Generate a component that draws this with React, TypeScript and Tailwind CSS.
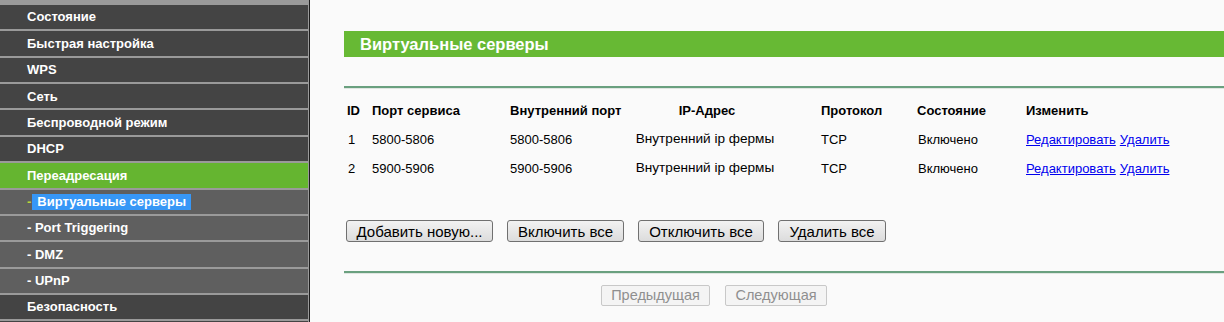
import React from "react";

type MenuItem = {
  label: string;
  kind: "top" | "sub" | "active" | "selected";
};

const menu: MenuItem[] = [
  { label: "Состояние", kind: "top" },
  { label: "Быстрая настройка", kind: "top" },
  { label: "WPS", kind: "top" },
  { label: "Сеть", kind: "top" },
  { label: "Беспроводной режим", kind: "top" },
  { label: "DHCP", kind: "top" },
  { label: "Переадресация", kind: "active" },
  { label: "Виртуальные серверы", kind: "selected" },
  { label: "Port Triggering", kind: "sub" },
  { label: "DMZ", kind: "sub" },
  { label: "UPnP", kind: "sub" },
  { label: "Безопасность", kind: "top" },
];

type Row = {
  id: number;
  servicePort: string;
  innerPort: string;
  ip: string;
  protocol: string;
  status: string;
};

const rows: Row[] = [
  {
    id: 1,
    servicePort: "5800-5806",
    innerPort: "5800-5806",
    ip: "Внутренний ip фермы",
    protocol: "TCP",
    status: "Включено",
  },
  {
    id: 2,
    servicePort: "5900-5906",
    innerPort: "5900-5906",
    ip: "Внутренний ip фермы",
    protocol: "TCP",
    status: "Включено",
  },
];

function Sidebar() {
  return (
    <div className="flex shrink-0">
      <div className="flex w-[309px] flex-col gap-[2px] bg-[#9a9a9a] pt-[5px] pr-px">
        {menu.map((item) => {
          const bg =
            item.kind === "active"
              ? "bg-[#65b530]"
              : item.kind === "top"
                ? "bg-[#444444]"
                : "bg-[#5f5f5f]";
          return (
            <div
              key={item.label}
              className={`flex h-[24.36px] shrink-0 items-center pl-[27px] text-[13px] font-bold text-white ${bg}`}
            >
              {item.kind === "selected" ? (
                <>
                  <span className="text-[#b9d53a]">-</span>
                  <span className="ml-px bg-[#3797f6] px-[5px] leading-[16px]">
                    Виртуальные серверы
                  </span>
                </>
              ) : item.kind === "sub" ? (
                <span>- {item.label}</span>
              ) : (
                <span>{item.label}</span>
              )}
            </div>
          );
        })}
        <div className="h-[40px] shrink-0 bg-[#444444]" />
      </div>
      <div className="w-px bg-[#1e1e1e]" />
    </div>
  );
}

function Button({ label, w }: { label: string; w: string }) {
  return (
    <button
      type="button"
      className={`h-[22px] ${w} rounded-[3px] border border-[#707070] bg-gradient-to-b from-[#f2f2f2] to-[#dcdcdc] text-[15px] leading-none text-black`}
    >
      {label}
    </button>
  );
}

function PagerButton({ label, w }: { label: string; w: string }) {
  return (
    <button
      type="button"
      disabled
      className={`h-[21px] ${w} rounded-[2px] border border-[#c8c8c8] bg-[#f4f4f4] text-[14.5px] leading-none text-[#8f8f8f]`}
    >
      {label}
    </button>
  );
}

export default function App() {
  return (
    <div
      className="flex h-[322px] w-[1224px] overflow-hidden bg-[#fafafa]"
      style={{ fontFamily: '"Liberation Sans", Arial, sans-serif' }}
    >
      <Sidebar />

      <div className="flex flex-1 flex-col pt-[31px] pl-[34px]">
        <div className="flex h-[26px] items-center bg-[#67b934] pl-[16px] text-[16.5px] font-bold text-white">
          Виртуальные серверы
        </div>

        <div className="mt-[29px] h-[2px] bg-[#6aa07f]" />
        <div className="h-px bg-[#dfe6e1]" />

        {/* table */}
        <div className="mt-[7px] text-[13px] text-black">
          <div className="flex h-[29px] items-center font-bold">
            <div className="w-[28px] pl-[3px]">ID</div>
            <div className="w-[138px]">Порт сервиса</div>
            <div className="w-[122px]">Внутренний порт</div>
            <div className="w-[150px] text-center">IP-Адрес</div>
            <div className="w-[39px]" />
            <div className="w-[96px]">Протокол</div>
            <div className="w-[109px]">Состояние</div>
            <div>Изменить</div>
          </div>
          {rows.map((r) => (
            <div key={r.id} className="flex h-[29px] items-center">
              <div className="w-[28px] pl-[4px]">{r.id}</div>
              <div className="w-[138px]">{r.servicePort}</div>
              <div className="w-[122px]">{r.innerPort}</div>
              <div className="w-[146px] text-center text-[13.6px]">{r.ip}</div>
              <div className="w-[43px]" />
              <div className="w-[97px]">{r.protocol}</div>
              <div className="w-[108px]">{r.status}</div>
              <div className="flex gap-[4px] text-[#0000ee]">
                <a href="#" className="underline">
                  Редактировать
                </a>
                <a href="#" className="underline">
                  Удалить
                </a>
              </div>
            </div>
          ))}
        </div>

        <div className="mt-[37px] flex gap-[14px] pl-[2px]">
          <Button label="Добавить новую..." w="w-[147px]" />
          <Button label="Включить все" w="w-[117px]" />
          <Button label="Отключить все" w="w-[126px]" />
          <Button label="Удалить все" w="w-[108px]" />
        </div>

        <div className="mt-[29px] h-[2px] bg-[#6aa07f]" />
        <div className="h-px bg-[#dfe6e1]" />

        <div className="mt-[11px] flex gap-[15px] pl-[257px]">
          <PagerButton label="Предыдущая" w="w-[109px]" />
          <PagerButton label="Следующая" w="w-[102px]" />
        </div>
      </div>
    </div>
  );
}
